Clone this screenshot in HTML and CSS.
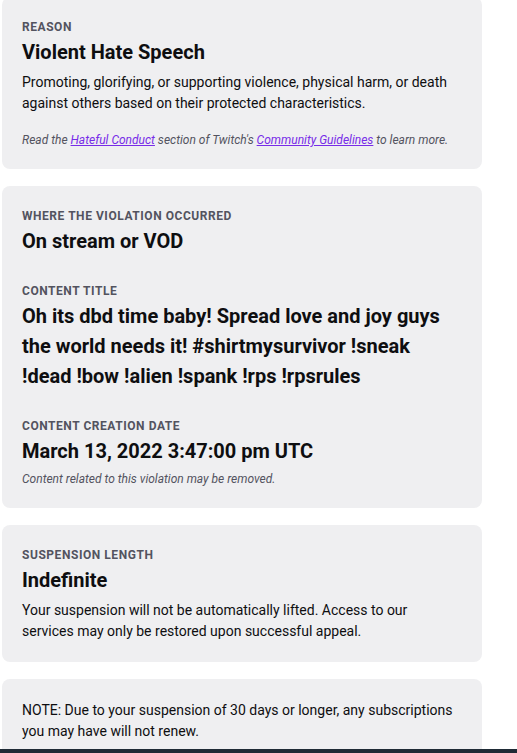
FILE: index.html
```html
<!DOCTYPE html>
<html lang="en">
<head>
<meta charset="utf-8">
<title>Suspension details</title>
<link rel="stylesheet" href="styles.css">
</head>
<body>
<main class="page">
  <section class="card">
    <div class="label">REASON</div>
    <h2 class="value">Violent Hate Speech</h2>
    <p class="body">Promoting, glorifying, or supporting violence, physical harm, or death against others based on their protected characteristics.</p>
    <p class="hint hint--spaced">Read the <a href="#">Hateful Conduct</a> section of Twitch's <a href="#">Community Guidelines</a> to learn more.</p>
  </section>

  <section class="card">
    <div class="field">
      <div class="label">WHERE THE VIOLATION OCCURRED</div>
      <h2 class="value">On stream or VOD</h2>
    </div>
    <div class="field">
      <div class="label">CONTENT TITLE</div>
      <h2 class="value">Oh its dbd time baby! Spread love and joy guys the world needs it! #shirtmysurvivor !sneak !dead !bow !alien !spank !rps !rpsrules</h2>
    </div>
    <div class="field">
      <div class="label">CONTENT CREATION DATE</div>
      <h2 class="value">March 13, 2022 3:47:00 pm UTC</h2>
      <p class="hint hint--tight">Content related to this violation may be removed.</p>
    </div>
  </section>

  <section class="card">
    <div class="label">SUSPENSION LENGTH</div>
    <h2 class="value">Indefinite</h2>
    <p class="body">Your suspension will not be automatically lifted. Access to our services may only be restored upon successful appeal.</p>
  </section>

  <section class="card">
    <p class="body body--plain">NOTE: Due to your suspension of 30 days or longer, any subscriptions you may have will not renew.</p>
  </section>
</main>
<div class="footer-bar"></div>
</body>
</html>
```

FILE: styles.css
```css
html, body {
  margin: 0;
  padding: 0;
  background: #ffffff;
}

body {
  font-family: Roboto, "Liberation Sans", sans-serif;
  color: #0e0e10;
}

.page {
  margin-top: -3px;
  padding: 0 0 40px 2px;
  display: flex;
  flex-direction: column;
  gap: 17px;
}

.card {
  width: 480px;
  box-sizing: border-box;
  background: #efeff1;
  border-radius: 8px;
  padding: 21px 20px 20px 20px;
}

.field + .field {
  margin-top: 26px;
}

.label {
  font-size: 12px;
  line-height: 18px;
  font-weight: 700;
  letter-spacing: 0.55px;
  color: #53535f;
  margin-bottom: 1px;
}

.value {
  margin: 0;
  font-size: 20px;
  line-height: 30px;
  font-weight: 700;
  color: #0e0e10;
}

.body {
  margin: 5px 0 0;
  font-size: 14px;
  line-height: 21px;
  color: #0e0e10;
}

.body--plain {
  margin: 0;
}

.hint {
  margin: 0;
  font-size: 12px;
  line-height: 18px;
  font-style: italic;
  color: #53535f;
}

.hint--spaced {
  margin-top: 17px;
}

.hint--tight {
  margin-top: 4px;
}

.hint a {
  color: #772ce8;
  text-decoration: underline;
}

.footer-bar {
  position: fixed;
  left: 0;
  right: 0;
  bottom: 0;
  height: 4px;
  background: #1f2b36;
}
```
